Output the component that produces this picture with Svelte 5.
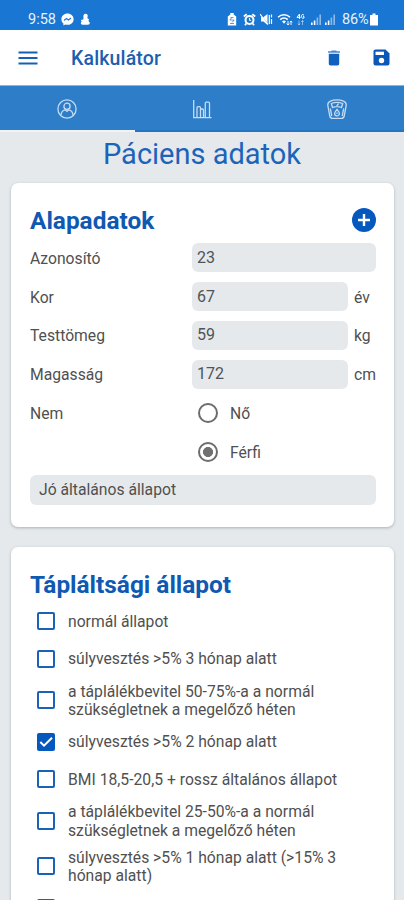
<script lang="ts">
/*******************************************************************************
*                                                                              *
*                          Kalkulátor - patient data                           *
*                                                                              *
*******************************************************************************/

  type Field  = { Label:string; Value:string; Unit?:string }
  type Option = { Label:string; checked:boolean; tall?:boolean }

  let Fields = $state<Field[]>([
    { Label:'Azonosító', Value:'23' },
    { Label:'Kor',       Value:'67',  Unit:'év' },
    { Label:'Testtömeg', Value:'59',  Unit:'kg' },
    { Label:'Magasság',  Value:'172', Unit:'cm' },
  ])

  let Gender = $state('Férfi')
  let activeTab = $state(0)

  let Options = $state<Option[]>([
    { Label:'normál állapot', checked:false },
    { Label:'súlyvesztés >5% 3 hónap alatt', checked:false },
    { Label:'a táplálékbevitel 50-75%-a a normál\nszükségletnek a megelőző héten', checked:false, tall:true },
    { Label:'súlyvesztés >5% 2 hónap alatt', checked:true },
    { Label:'BMI 18,5-20,5 + rossz általános állapot', checked:false },
    { Label:'a táplálékbevitel 25-50%-a a normál\nszükségletnek a megelőző héten', checked:false, tall:true },
    { Label:'súlyvesztés >5% 1 hónap alatt (>15% 3\nhónap alatt)', checked:false, tall:true },
    { Label:'', checked:false },
  ])
</script>

<div class="screen">
  <div class="status">
    <span class="clock">9:58</span>
    <svg class="messenger" width="13" height="13" viewBox="0 0 13 13">
      <path d="M6.5 .5C3 .5 .4 3 .4 6.2c0 1.8.8 3.2 2 4.3v2l1.9-1c.7.2 1.4.3 2.2.3 3.5 0 6.1-2.4 6.1-5.6S10 .5 6.5 .5z" fill="#fff"/>
      <path d="M3 7.500l2.400-2.100 2 1.600L10 5" fill="none" stroke="#1976d2" stroke-width="1.100"/>
    </svg>
    <svg class="figure" width="10" height="13" viewBox="0 0 10 13">
      <path d="M5.500.7c1.700 0 2.400 1.200 2.200 2.600L7.300 5l1.700 1.200-.5 1.800 1.200 1.500c.3 1.700-1 2.500-2.400 2.200H2.500C.8 11.700.2 9.700 1.700 8.800L.8 7l2.500-.5.2-1.700C3 2.500 3.800.7 5.500.7z" fill="#fff"/>
    </svg>
    <span class="spacer"></span>
    <svg width="10" height="13" viewBox="0 0 10 13">
      <path d="M3.300 0h3.400v1.500l2.500 2V12.500H.8v-9l2.500-2z" fill="#fff"/>
      <path d="M5 4.500L2.800 7H7.200L5 9.500M3 10.500h4M3.500 4.500h3" fill="none" stroke="#1976d2" stroke-width=".7"/>
    </svg>
    <svg class="alarm" width="13" height="13" viewBox="0 0 13 13" fill="none" stroke="#fff">
      <circle cx="6.500" cy="7" r="4" stroke-width="2"/>
      <path d="M.8 3.500L3.700 1.200M12.200 3.500L9.300 1.200M3.300 10.500L2 12.300M9.700 10.500l1.300 1.800" stroke-width="1.800"/>
      <path d="M6.500 4.800V7.300h1.700" stroke-width="1"/>
    </svg>
    <svg class="mute" width="13" height="13" viewBox="0 0 13 13">
      <path d="M1 4h2.500L7.500 1v11L3.500 8.500H1z" fill="#fff"/>
      <path d="M.5 1.500l8 10" stroke="#1976d2" stroke-width=".8"/>
      <path d="M0 1l8 10.500M9.300 2v9M11.500 1.500v3M11.500 6v5" stroke="#fff" stroke-width="1.200"/>
    </svg>
    <svg class="wifi" width="16" height="13" viewBox="0 0 16 13" fill="none" stroke="#fff">
      <path d="M1 4.200c3.400-3.300 8.600-3.300 12 0M3.200 6.600c2.200-2 5.400-2 7.600 0" stroke-width="1.500"/>
      <path d="M5 8.300c1.200-1 2.800-1 4 0L7 10.800z" fill="#fff" stroke="none"/>
      <path d="M11 8v4M9.700 10.500L11 12l1.300-1.500M14 12V8M12.900 9.300L14 8l1.300 1.300" stroke-width=".9"/>
    </svg>
    <svg class="net" width="9" height="13" viewBox="0 0 9 13" fill="none" stroke="#fff">
      <path d="M3.500 6V1L1 4.400h3.600M8 2.200C6.500.8 5.300 1.800 5.400 3.500S7 5.700 8 5V3.600H7" stroke-width="1"/>
      <path d="M3 7.500v4.500M1.800 10.500L3 12l1.200-1.500M6.500 12V7.500M5.300 9l1.200-1.500L7.700 9" stroke-width=".8" opacity=".6"/>
    </svg>
    {#each [1, 2] as Sim (Sim)}
      <svg class="signal" width="12" height="13" viewBox="0 0 12 13" fill="#fff">
        <path d="M1 9.500h1.600V12H1zM3.800 7.500h1.600V12H3.800z"/>
        <path d="M6.600 4.500h1.600V12H6.600zM9.400 1.500H11V12H9.400z" opacity=".5"/>
      </svg>
    {/each}
    <span class="percent">86%</span>
    <svg class="battery" width="8" height="13" viewBox="0 0 8 13"><path d="M2.500.5h3V2H8v10.500H0V2h2.500z" fill="#fff"/></svg>
  </div>

  <header class="appbar">
    <svg width="20" height="14" viewBox="0 0 20 14"><path d="M.5 1.500h19M.5 7h19M.5 12.500h19" stroke="#1661b4" stroke-width="1.800"/></svg>
    <h1>Kalkulátor</h1>
    <svg class="trash" width="12" height="16" viewBox="0 0 12 16" fill="#1060bd">
      <path d="M.8 3.800h10.400v10c0 1-.7 1.700-1.700 1.700h-7c-1 0-1.700-.7-1.700-1.700z"/>
      <path d="M0 1.200h3L3.900.4h4.200l.9.800h3v1.600H0z" opacity=".75"/>
    </svg>
    <svg width="17" height="17" viewBox="0 0 17 17">
      <path d="M2.500.5h10l4 4v10c0 1.100-.9 2-2 2h-12c-1.100 0-2-.9-2-2v-12c0-1.100.9-2 2-2z" fill="#0b58b8"/>
      <path d="M2.500 2.700h8.500v3.300H2.500z" fill="#fff"/>
      <circle cx="8.500" cy="11.500" r="2.700" fill="#fff"/>
    </svg>
  </header>

  <div class="tabs">
    <button class="tab" class:active={activeTab === 0} aria-label="Páciens" onclick={() => activeTab = 0}>
      <svg width="20" height="20" viewBox="0 0 20 20" fill="none" stroke="#c5dcf3" stroke-width="1.300">
        <circle cx="10" cy="10" r="9.100"/>
        <circle cx="10" cy="7.300" r="3.100"/>
        <path d="M4 16.300c.2-3.500 2-5 4.200-5.500L10 12.300l1.800-1.500c2.200.5 4 2 4.200 5.500"/>
      </svg>
    </button>
    <button class="tab" class:active={activeTab === 1} aria-label="Diagram" onclick={() => activeTab = 1}>
      <svg width="20" height="20" viewBox="0 0 20 20" fill="none" stroke="#c5dcf3" stroke-width="1.300">
        <path d="M1.700 1v17.700h17.800M5 18.700V8.700q0-1 1-1h1.500q1 0 1 1v10M8.500 11q0-1 1-1h1q1 0 1 1v7.700M13.300 18.700V4.200q0-1 1-1h2.200q1 0 1 1v14.500"/>
      </svg>
    </button>
    <button class="tab" class:active={activeTab === 2} aria-label="Testsúly" onclick={() => activeTab = 2}>
      <svg width="20" height="20" viewBox="0 0 20 20" fill="none" stroke="#c5dcf3" stroke-width="1.300">
        <path d="M3.500 2.100C7 .4 13 .4 16.500 2.100c2.200.9 3 2.600 2.600 4.700l-1.900 10.200c-.3 1.400-1.100 2.300-2.500 2.300H5.300c-1.400 0-2.200-.9-2.500-2.300L.9 6.800C.5 4.700 1.300 3 3.500 2.100z"/>
        <path d="M4.300 4.500c3.500-1.500 7.900-1.500 11.400 0L14.500 8.500c-2.900-1.200-6.100-1.200-9 0zM9.700 7l1.800-2.300M10 10.500c-1 1.400-2.400 2.500-2.400 3.900a2.400 2.400 0 004.800 0c0-1.400-1.400-2.500-2.400-3.900zM10 13.500v1.500M3.300 9.500L4.800 17M16.700 9.500L15.200 17"/>
      </svg>
    </button>
  </div>

  <h2 class="title">Páciens adatok</h2>

  <section class="card">
    <div class="card-head">
      <h3>Alapadatok</h3>
      <svg width="24" height="24" viewBox="0 0 24 24">
        <circle cx="12" cy="12" r="12" fill="#0558bd"/>
        <path d="M12 6v12M6 12h12" stroke="#fff" stroke-width="2.400"/>
      </svg>
    </div>

    {#each Fields as Field (Field.Label)}
      <label class="row">
        <span class="label">{Field.Label}</span>
        <input bind:value={Field.Value} />
        {#if Field.Unit}<span class="unit">{Field.Unit}</span>{/if}
      </label>
    {/each}

    <div class="row">
      <span class="label">Nem</span>
      <label class="radio"><input type="radio" bind:group={Gender} value="Nő" />Nő</label>
    </div>
    <div class="row">
      <span class="label"></span>
      <label class="radio"><input type="radio" bind:group={Gender} value="Férfi" />Férfi</label>
    </div>

    <div class="condition">Jó általános állapot</div>
  </section>

  <section class="card second">
    <div class="card-head">
      <h3>Tápláltsági állapot</h3>
    </div>
    {#each Options as Option (Option.Label)}
      <label class="option" class:tall={Option.tall}>
        <input type="checkbox" bind:checked={Option.checked} />
        <span class="box" class:checked={Option.checked}>
          {#if Option.checked}
            <svg width="18" height="18" viewBox="0 0 18 18"><path d="M3.300 9l3.700 3.700L15 4.700" fill="none" stroke="#fff" stroke-width="2"/></svg>
          {/if}
        </span>
        <span class="text">{Option.Label}</span>
      </label>
    {/each}
  </section>
</div>

<style>
  :global(body) { margin: 0; background: #e5e9ec; }

  .screen {
    width: 404px; height: 900px;
    overflow: hidden;
    background: #e5e9ec;
    color: #505050;
    font-family: Roboto, sans-serif;
    font-size: 15.700px;
  }
  h1, h2, h3 { margin: 0; }
  svg { display: block; flex-shrink: 0; }

/**** status bar ****/

  .status {
    display: flex;
    align-items: center;
    height: 30px;
    padding: 9px 26px 0 28px;
    box-sizing: border-box;
    background: #1976d2;
    color: #e8f2fc;
    font-size: 14.500px;
  }
  .clock     { width: 33px; }
  .figure    { margin-left: 6px; }
  .spacer    { flex: 1; }
  .alarm     { margin-left: 6px; }
  .mute      { margin-left: 4px; }
  .wifi      { margin-left: 4px; }
  .net       { margin-left: 3px; }
  .signal    { margin-left: 2px; }
  .net + .signal { margin-left: 5px; }
  .percent   { margin-left: 6px; width: 28px; letter-spacing: -.2px; }

/**** app bar and tabs ****/

  .appbar {
    display: flex;
    align-items: center;
    height: 56px;
    padding: 0 14px 0 18px;
    box-sizing: border-box;
    background: #fff;
    border-bottom: 1px solid #8fb4d8;
  }
  .appbar h1 {
    flex: 1;
    margin-left: 33px;
    padding-top: 2px;
    font-size: 19.500px;
    font-weight: 500;
    letter-spacing: .15px;
    color: #1c5fb0;
  }
  .trash { margin-right: 33px; }

  .tabs { display: flex; height: 46px; background: #2e7dc8; }
  .tab {
    display: flex;
    flex: 1;
    align-items: center;
    justify-content: center;
    padding: 2px 0 0;
    border: 0;
    border-bottom: 2px solid #2474c2;
    background: none;
  }
  .tab.active { border-bottom-color: #eef3f8; }

  .title {
    height: 51px;
    line-height: 45px;
    text-align: center;
    font-size: 29px;
    font-weight: 400;
    color: #1c63ba;
  }

/**** cards ****/

  .card {
    height: 344px;
    margin: 0 10px 20px 11px;
    padding: 19px 18px 0 19px;
    box-sizing: border-box;
    border-radius: 7px;
    background: #fff;
    box-shadow: 0 1px 3px rgba(60, 75, 90, .35);
  }
  .card.second { height: 420px; margin-bottom: 0; }
  .card-head {
    display: flex;
    align-items: center;
    justify-content: space-between;
    height: 36.200px;
  }
  .card-head svg { margin-top: -1px; }
  h3 {
    font-size: 24.400px;
    font-weight: 700;
    color: #0f59b3;
  }
  .second .card-head { height: 36.800px; }

  .row {
    display: flex;
    align-items: center;
    height: 38.900px;
  }
  .label { width: 162px; padding-top: 1px; }
  .row input:not([type]) {
    flex: 1;
    min-width: 0;
    height: 29.500px;
    padding: 0 5px 1px;
    box-sizing: border-box;
    border: 0;
    border-radius: 6px;
    background: #e5e9ec;
    color: #505458;
    font: inherit;
    font-size: 16px;
  }
  .unit { width: 22px; margin-left: 6px; padding-top: 1px; }

  .radio { display: flex; align-items: center; }
  .radio input {
    appearance: none;
    width: 20px; height: 20px;
    margin: 0 12px 0 6px;
    border: 2px solid #6c6c6c;
    border-radius: 50%;
    background: #fff;
  }
  .radio input:checked { background: radial-gradient(circle, #707070 4.700px, #fff 5.300px); }

  .condition {
    height: 30px;
    margin-top: 3.800px;
    padding-left: 9px;
    line-height: 30px;
    border-radius: 6px;
    background: #e5e9ec;
  }

/**** checkbox list ****/

  .option {
    display: flex;
    align-items: center;
    height: 37.300px;
    padding-left: 7px;
    line-height: 18.500px;
  }
  .option.tall { height: 45.700px; }
  .option input { position: absolute; opacity: 0; pointer-events: none; }
  .box {
    width: 18px; height: 18px;
    flex-shrink: 0;
    box-sizing: border-box;
    border: 2px solid #1a62b8;
    border-radius: 2px;
  }
  .box.checked { border: 0; background: #0558bd; }
  .text { margin-left: 13px; padding-top: 2px; white-space: pre; }
</style>
